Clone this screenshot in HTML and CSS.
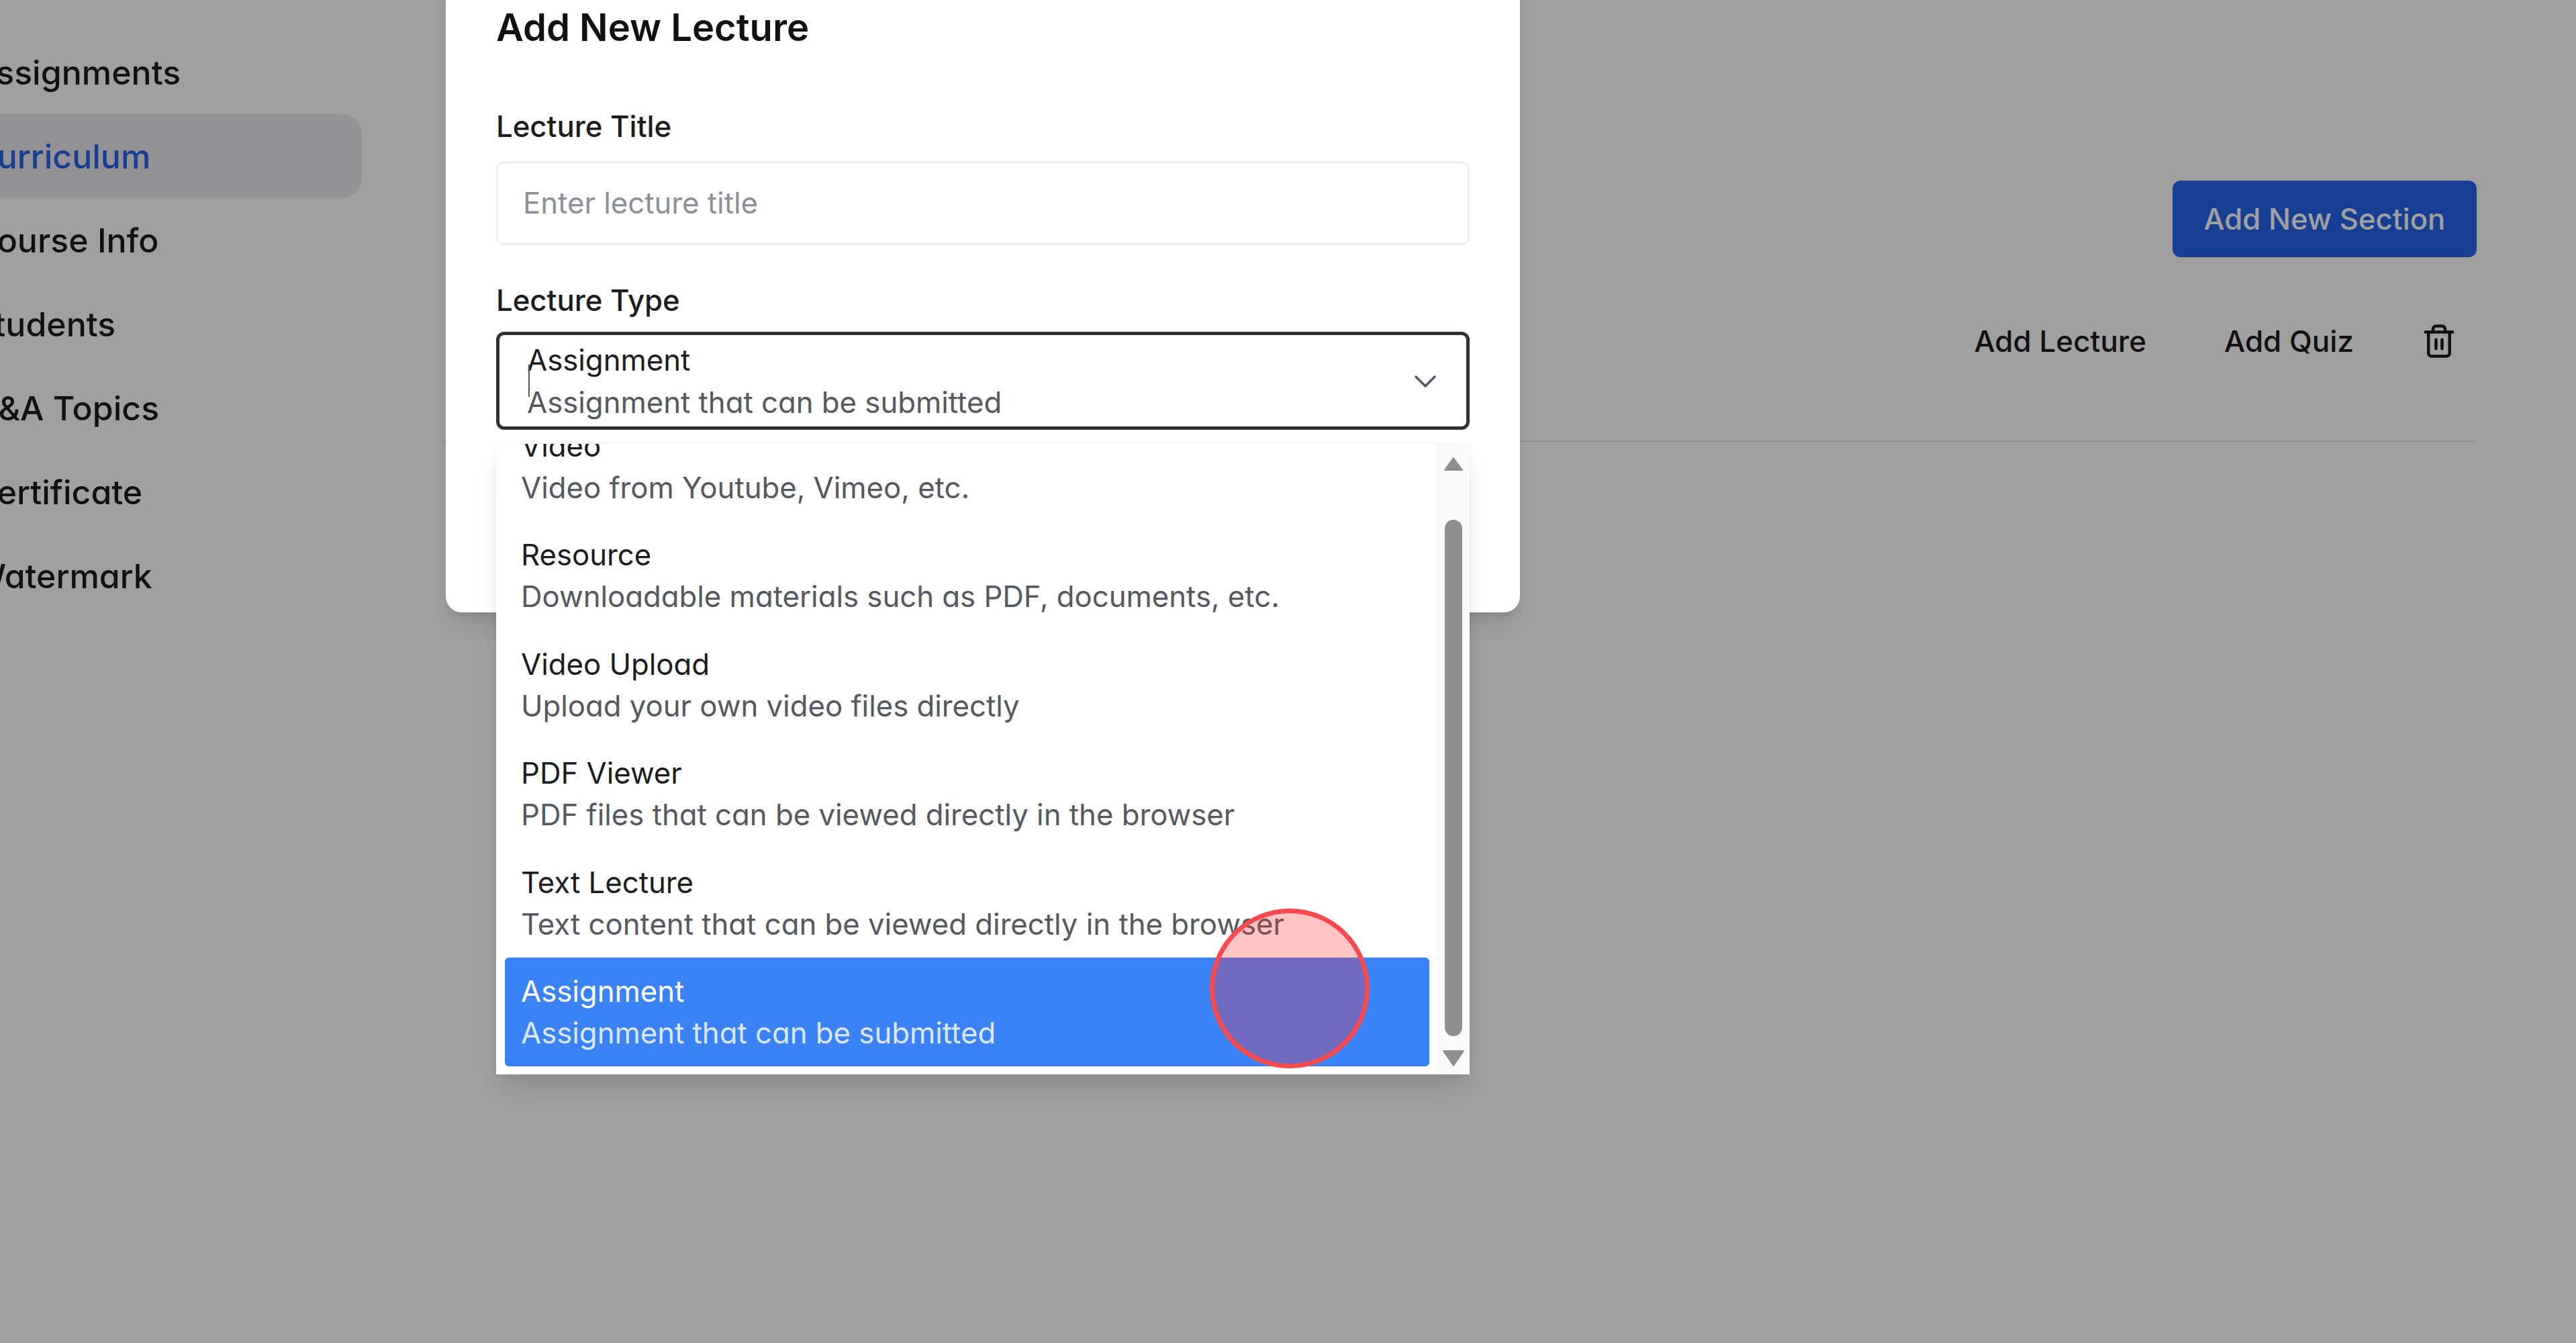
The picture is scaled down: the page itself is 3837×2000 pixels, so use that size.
FILE: index.html
```html
<!DOCTYPE html>
<html lang="en">
<head>
<meta charset="utf-8">
<title>Curriculum</title>
<link rel="stylesheet" href="styles.css">
</head>
<body>
<div class="page">
  <aside class="sidebar">
    <nav class="nav">
      <a class="nav-item lead">Announcements</a>
      <a class="nav-item">Assignments</a>
      <a class="nav-item active">Curriculum</a>
      <a class="nav-item">Course Info</a>
      <a class="nav-item">Students</a>
      <a class="nav-item">Q&amp;A Topics</a>
      <a class="nav-item">Certificate</a>
      <a class="nav-item">Watermark</a>
    </nav>
  </aside>
  <main class="main">
    <div class="toolbar"><button class="primary">Add New Section</button></div>
    <div class="section-row">
      <span class="link">Add Lecture</span>
      <span class="link quiz">Add Quiz</span>
      <svg class="trash" viewBox="0 0 24 24" fill="none" stroke="currentColor" stroke-width="2" stroke-linecap="round" stroke-linejoin="round"><path d="M3 6h18"/><path d="M19 6v14a2 2 0 0 1-2 2H7a2 2 0 0 1-2-2V6"/><path d="M8 6V4a2 2 0 0 1 2-2h4a2 2 0 0 1 2 2v2"/><path d="M10 11v6"/><path d="M14 11v6"/></svg>
    </div>
  </main>
</div>
<div class="overlay"></div>
<div class="modal">
  <h2 class="modal-title">Add New Lecture</h2>
  <label class="label first">Lecture Title</label>
  <div class="input">Enter lecture title</div>
  <label class="label second">Lecture Type</label>
  <div class="select">
    <div class="select-value">
      <div class="opt-title">Assignment</div>
      <div class="opt-desc">Assignment that can be submitted</div>
    </div>
    <i class="caret"></i>
    <svg class="chevron" viewBox="0 0 32 18" fill="none" stroke="currentColor" stroke-width="3.4" stroke-linecap="round" stroke-linejoin="round"><path d="M2 2l14 14L30 2"/></svg>
    <div class="dropdown">
      <div class="list">
        <div class="option"><div class="opt-title">Video</div><div class="opt-desc">Video from Youtube, Vimeo, etc.</div></div>
        <div class="option"><div class="opt-title">Resource</div><div class="opt-desc">Downloadable materials such as PDF, documents, etc.</div></div>
        <div class="option"><div class="opt-title">Video Upload</div><div class="opt-desc">Upload your own video files directly</div></div>
        <div class="option"><div class="opt-title">PDF Viewer</div><div class="opt-desc">PDF files that can be viewed directly in the browser</div></div>
        <div class="option"><div class="opt-title">Text Lecture</div><div class="opt-desc">Text content that can be viewed directly in the browser</div></div>
        <div class="option selected"><div class="opt-title">Assignment</div><div class="opt-desc">Assignment that can be submitted</div></div>
      </div>
      <div class="scrollbar">
        <svg class="arrow up" viewBox="0 0 32 24"><path d="M16 3L29 21H3Z"/></svg>
        <i class="thumb"></i>
        <svg class="arrow down" viewBox="0 0 32 24"><path d="M1 1H31L16 23Z"/></svg>
      </div>
    </div>
  </div>
</div>
<div class="click-marker"></div>
</body>
</html>
```
FILE: styles.css
```css
* { box-sizing: border-box; }
html, body { margin: 0; height: 100%; }
body {
  width: 3837px; height: 2000px; overflow: hidden; background: #fff; position: relative;
  font-family: Inter, "Liberation Sans", sans-serif; color: #1c1c1f;
  font-feature-settings: "cv11" 1;
}
.page { display: flex; height: 100%; }
.sidebar { width: 660px; flex: none; }
.nav { display: flex; flex-direction: column; width: 599px; margin: -80px 0 0 -60px; }
.nav-item { height: 125px; flex: none; display: flex; align-items: center; padding-left: 19px; font-size: 50px; font-weight: 500; color: #1c1c1f; border-radius: 30px; }
.nav-item.lead { padding-bottom: 9px; }
.nav-item.active { background: #e9e9ec; color: #2563eb; }
.main { flex: 1; padding: 269px 148px 0 0; display: flex; flex-direction: column; }
.toolbar { display: flex; justify-content: flex-end; height: 114px; }
.primary { width: 453px; height: 114px; border: 0; border-radius: 12px; background: #2563eb; color: #fff; font: 500 43.7px Inter, sans-serif; font-feature-settings: "cv11" 1; }
.section-row { height: 276px; padding: 98px 29px 0 0; border-bottom: 3px solid #f0f0f0; display: flex; justify-content: flex-end; align-items: flex-start; font-size: 44px; font-weight: 500; color: #1c1c1f; }
.quiz { margin: 0 100px 0 116px; }
.trash { width: 54px; height: 54px; }
.overlay { position: absolute; inset: 0; background: rgba(0,0,0,.373); }
.modal { position: absolute; left: 664px; top: -40px; width: 1600px; height: 952px; background: #fff; border-radius: 0 0 24px 24px; box-shadow: 0 24px 36px -8px rgba(0,0,0,.1), 0 10px 14px -6px rgba(0,0,0,.1); padding: 40px 75px 0; }
.modal-title { margin: 0; font-size: 56.1px; line-height: 82px; font-weight: 600; color: #111113; }
.label { display: block; font-size: 43.7px; font-weight: 500; line-height: 60px; color: #1c1c1f; }
.first { margin-top: 77px; }
.second { margin-top: 53px; }
.input { margin-top: 21px; height: 125px; border: 3px solid #eceef0; border-radius: 12px; padding-left: 37px; display: flex; align-items: center; font-size: 43.7px; color: #8b8f98; }
.select { position: relative; margin-top: 16px; height: 146px; border: 5px solid #2f3136; border-radius: 12px; padding: 3px 0 0 41px; display: flex; align-items: center; }
.opt-title { font-size: 43.7px; line-height: 62px; color: #1c1c1f; }
.opt-desc { font-size: 43.7px; line-height: 62px; color: #55585f; }
.select-value .opt-desc { line-height: 64px; }
.caret { position: absolute; left: 43px; top: 44px; width: 2px; height: 48px; background: #555; }
.chevron { position: absolute; right: 45px; top: 60px; width: 32px; height: 18px; color: #4b5563; }
.dropdown { position: absolute; left: -5px; right: -5px; top: 162px; height: 939px; background: #fff; box-shadow: 0 24px 36px -8px rgba(0,0,0,.14), 0 0 6px rgba(0,0,0,.06); border-radius: 8px 8px 0 0; overflow: hidden; display: flex; }
.list { flex: 1; padding: 0 11px 0 13px; margin-top: -48px; min-width: 0; }
.option { height: 162.5px; padding: 3px 0 0 24px; display: flex; flex-direction: column; justify-content: center; white-space: nowrap; }
.option.selected { background: #3b82f6; border-radius: 6px; }
.option.selected .opt-title { color: #fff; }
.option.selected .opt-desc { color: #dbe7fd; }
.scrollbar { width: 49px; flex: none; background: #fafafa; position: relative; }
.arrow { position: absolute; left: 9px; width: 32px; height: 24px; fill: #8f8f8f; stroke: #8f8f8f; stroke-width: 2; stroke-linejoin: round; }
.arrow.up { top: 18px; }
.arrow.down { bottom: 12px; }
.thumb { position: absolute; left: 12px; width: 26px; top: 113px; height: 769px; border-radius: 13px; background: #8f8f8f; }
.click-marker { position: absolute; left: 1802px; top: 1353px; width: 238px; height: 238px; border-radius: 50%; border: 7px solid #f94a4e; background: rgba(255,40,40,.27); }
```
